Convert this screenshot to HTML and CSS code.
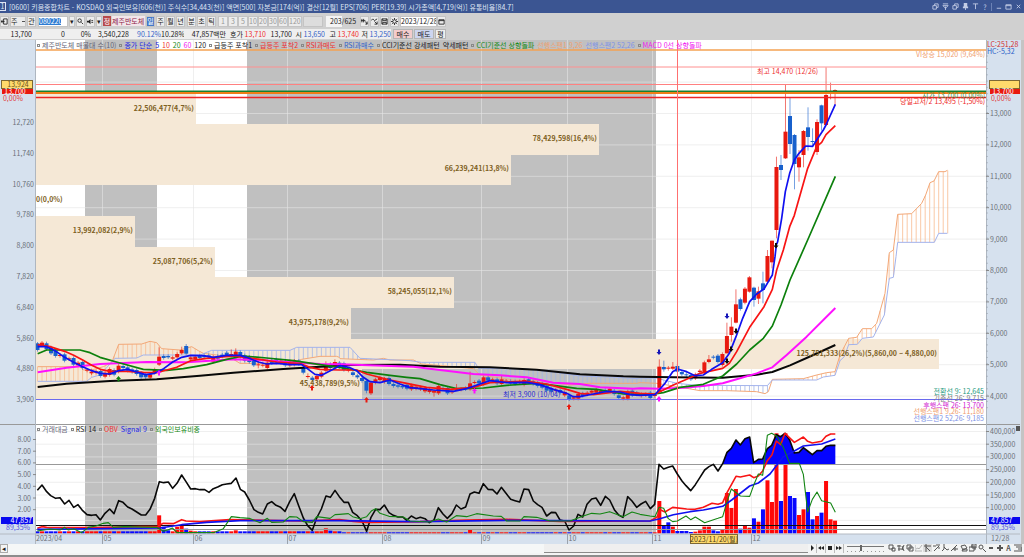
FILE: index.html
```html
<!DOCTYPE html>
<html lang="ko">
    <head>
        <meta charset="utf-8">
        <title>[0600] 키움종합차트</title>
        <meta name="viewport" content="width=device-width, initial-scale=1.0">
        <link rel="stylesheet" href="styles.css">
        <script src="chart.js" defer></script>
    </head>
    <body>
        <header class="titlebar">
            <span class="logo">1</span>
            <h1>[0600] 키움종합차트 - KOSDAQ 외국인보유[606(천)] 주식수[34,443(천)] 액면[500] 자본금[174(억)] 결산[12월] EPS[706] PER[19.39] 시가총액[4,719(억)] 유통비율[84.7]</h1>
            <div class="window-buttons">
                <button aria-label="link"><svg viewBox="0 0 8 8"><path d="M1 3h4v4H1zM3 3V1h4v4H5"/></svg></button>
                <button aria-label="top"><svg viewBox="0 0 8 8"><path d="M1 1h6M1 3h6L4 6zM4 4v4"/></svg></button>
                <button aria-label="copy"><svg viewBox="0 0 8 8"><path d="M1 3h4v4H1zM3 3V1h4v4H5"/></svg></button>
                <button aria-label="pin"><svg viewBox="0 0 8 8"><path class="solid" d="M2 0h4v4h1v2H1V4h1z"/><path d="M4 5v3"/></svg></button>
                <button aria-label="text"><svg viewBox="0 0 8 8"><path d="M1 1h6M4 1v6"/></svg></button>
                <button aria-label="help">?</button>
                <span class="split"></span>
                <button aria-label="minimize"><svg viewBox="0 0 8 8"><path d="M2 6h5"/></svg></button>
                <button aria-label="maximize"><svg viewBox="0 0 8 8"><path d="M1 2h6v5H1zM1 3h6"/></svg></button>
                <button aria-label="close"><svg viewBox="0 0 8 8"><path d="M2 2l4 4M6 2l-4 4"/></svg></button>
            </div>
        </header>

        <nav class="toolbar" aria-label="차트 도구">
            <button class="icon" aria-label="panel"><svg viewBox="0 0 8 8"><path d="M3 1h4v6H3zM0 4h4M2 2L0 4l2 2"/></svg></button>
            <select class="kind" aria-label="종류"><option>주</option></select>
            <button>관</button>
            <input class="code" aria-label="종목코드" value="080220">
            <button class="arrow" aria-label="목록">▾</button>
            <button class="icon" aria-label="검색"><svg viewBox="0 0 8 8"><circle cx="3" cy="3" r="2"/><path d="M5 5l2 2"/></svg></button>
            <button class="icon" aria-label="소리"><svg viewBox="0 0 8 8"><path class="solid" d="M0 3h2l2-2v6L2 5H0z"/><path d="M5 3h2M5 5h2"/></svg></button>
            <button class="arrow" aria-label="소리 설정">▾</button>
            <span class="badge">정</span>
            <span class="stock">제주반도체</span>
            <div class="group">
                <button class="active">일</button><button>주</button><button>월</button><button>년</button>
            </div>
            <div class="group">
                <button>분</button><button>초</button><button>틱</button>
            </div>
            <div class="group minutes">
                <button>1</button><button>3</button><button>5</button><button>10</button><button>20</button><button>30</button><button>60</button><button>120</button>
            </div>
            <select class="unit" aria-label="단위"><option></option></select>
            <label class="count"><input aria-label="봉 개수" value="203">/625</label>
            <button class="icon" aria-label="좁게"><svg viewBox="0 0 8 8"><path d="M0 3h5M1 1v4M3 1v4M5 4l2 3M7 4v3H5"/></svg></button>
            <button class="icon" aria-label="비교"><svg viewBox="0 0 8 8"><path d="M0 3l2-2 2 2 3-2M4 4l3 3M7 4v3H4"/></svg></button>
            <button class="icon" aria-label="저장"><svg viewBox="0 0 8 8"><path d="M1 1h6v6H1zM2 1v2h4V1M2 7V5h4v2"/></svg></button>
            <button class="icon" aria-label="설정"><svg viewBox="0 0 8 8"><circle cx="4" cy="4" r="2"/><path d="M4 0v2M4 6v2M0 4h2M6 4h2M1 1l1 1M6 6l1 1M7 1L6 2M2 6L1 7"/></svg></button>
            <input class="date" aria-label="날짜" value="2023/12/28">
            <button class="icon cal" aria-label="달력"><svg viewBox="0 0 8 8"><path d="M1 2h6v5H1zM1 3h6"/></svg></button>
        </nav>

        <div class="quote">
            <span>13,700</span><span>0</span><span>0%</span><span>3,540,228</span><span class="blue">90.12%</span><span>10.28%</span><span>47,857백만</span>
            <span>호가</span><span class="red">13,710</span><span>13,700</span><span>시</span><span class="blue">13,650</span><span>고</span><span class="red">13,740</span><span>저</span><span class="blue">13,250</span>
            <button class="buy">매수</button><button class="sell">매도</button><button>평</button>
        </div>

        <main class="chart">
            <svg id="chart" viewBox="0 40 1024 504" role="img" aria-label="제주반도체 일봉 차트"></svg>
            <div class="legend price-legend">
                <span class="slate">제주반도체 매물대 수(10)</span>
                <span class="navy">종가 단순</span><i class="navy">5</i><i class="red">10</i><i class="green">20</i><i class="pink">60</i><i>120</i>
                <span>급등주 포착1</span>
                <span class="red">급등주 포착2</span>
                <span class="red">RSI과매도</span>
                <span class="blue">RSI과매수</span>
                <span>CCI기준선 강세패턴</span><i>약세패턴</i>
                <span class="green">CCI기준선 상향돌파</span><i class="orange">선행스팬1 9,26</i><i class="sky">선행스팬2 52,26</i>
                <span class="pink">MACD 0선 상향돌파</span>
            </div>
            <div class="legend volume-legend">
                <span class="slate">거래대금</span>
                <span>RSI 14</span>
                <span class="red">OBV</span><i class="navy">Signal 9</i>
                <span class="green">외국인보유비중</span>
            </div>
        </main>

        <footer class="bottombar">
            <button class="prev" aria-label="왼쪽">◂</button>
            <div class="track"><div class="thumb"></div></div>
            <div class="play">
                <button aria-label="재생"><svg viewBox="0 0 8 8"><path class="solid" d="M3 1l3 3-3 3z"/></svg></button>
                <button aria-label="뒤로"><svg viewBox="0 0 8 8"><path class="solid" d="M4 2L1 4l3 2zM7 2L4 4l3 2z"/></svg></button>
                <button aria-label="정지"><svg viewBox="0 0 8 8"><path class="solid" d="M2 2h4v4H2z"/></svg></button>
                <button aria-label="앞으로"><svg viewBox="0 0 8 8"><path class="solid" d="M1 2l3 2-3 2zM4 2l3 2-3 2z"/></svg></button>
            </div>
            <input type="range" class="speed" aria-label="속도" value="36">
            <div class="tools">
                <button aria-label="창"><svg viewBox="0 0 8 8"><path d="M1 1h4v4H1zM4 4h3v3H4z"/></svg></button>
                <button aria-label="삭제"><svg viewBox="0 0 8 8"><path d="M0 2h4M1 5h5M2 1v6M5 2l2 5M7 1L5 6"/></svg></button>
                <button aria-label="복사"><svg viewBox="0 0 8 8"><path d="M1 1h4v4H1zM3 3h4v4H3z"/></svg></button>
                <button aria-label="차트"><svg viewBox="0 0 8 8"><path class="dim" d="M0 1v6h7M1 5l2-1 1 1 3-4"/></svg></button>
                <button aria-label="십자선" class="on"><svg viewBox="0 0 8 8"><path d="M2 0v8M0 2h7M2 3l4 4"/></svg></button>
                <button aria-label="추세선"><svg viewBox="0 0 8 8"><path d="M0 2h3M3 1h4M1 7l5-5M5 4h2"/></svg></button>
                <button aria-label="파동"><svg viewBox="0 0 8 8"><path d="M2 0v5L0 7M2 3l3 3 2-1"/></svg></button>
                <button aria-label="각도"><svg viewBox="0 0 8 8"><path d="M0 7l6-6M2 5h5M4 3v4"/></svg></button>
                <button aria-label="확대창"><svg viewBox="0 0 8 8"><path d="M1 2l4-1 2 3-4 2zM3 5h4v2H2z"/></svg></button>
                <button aria-label="겹치기"><svg viewBox="0 0 8 8"><path d="M3 0h4v4H3zM0 3h5v4H0zM2 2h4v4"/></svg></button>
                <button aria-label="돋보기"><svg viewBox="0 0 8 8"><circle cx="3" cy="3" r="2"/><path d="M5 5l3 3"/></svg></button>
                <button aria-label="축소"><svg viewBox="0 0 8 8"><path class="bold" d="M2 4h4"/></svg></button>
                <button aria-label="확대"><svg viewBox="0 0 8 8"><path class="bold" d="M1 4h6M4 1v6"/></svg></button>
                <button>A</button>
                <button aria-label="목록"><svg viewBox="0 0 8 8"><path d="M0 1h8M2 3h6v4H0M4 5h4"/></svg></button>
            </div>
        </footer>
    </body>
</html>
```
FILE: styles.css
```css
*,
*::before {
    box-sizing: border-box;
}

body {
    margin: 0;
    background-color: #d0d0d0;
    color: #222;
    font-family: "Noto Sans CJK KR", sans-serif;
    font-size: 7px;
    line-height: 10px;
}

button,
input,
select {
    margin: 0;
    padding: 0;
    border: 0;
    border-radius: 0;
    background: none;
    color: inherit;
    font: inherit;
    appearance: none;
}

button svg {
    display: block;
    width: 8px;
    height: 8px;
    margin: auto;
    fill: none;
    stroke: currentColor;
}

svg .solid {
    fill: currentColor;
    stroke: none;
}

svg .dim {
    opacity: 0.4;
}

svg .bold {
    stroke-width: 2;
}

/* title */
.titlebar {
    display: flex;
    align-items: center;
    height: 13px;
    padding-right: 2px;
    background-color: #3b5592;
    color: #dfe5f4;
}

.logo {
    width: 6px;
    height: 9px;
    line-height: 7px;
    border: 1px solid #dfe5f4;
    border-left: 0;
    text-align: center;
}

h1 {
    flex: 1;
    margin: 0 0 0 3px;
    font-size: 7px;
    font-weight: normal;
    white-space: nowrap;
}

.window-buttons {
    display: flex;
    align-items: center;
    gap: 2px;
}

.window-buttons button {
    width: 8px;
    color: #c3cde6;
}

.window-buttons svg {
    width: 7px;
    height: 7px;
}

.split {
    width: 1px;
    height: 8px;
    background-color: #6c82b5;
}

/* toolbar */
.toolbar {
    display: flex;
    align-items: center;
    gap: 1px;
    height: 15px;
    padding-top: 1px;
}

.toolbar button,
.toolbar select,
.toolbar input {
    height: 11px;
    min-width: 9px;
    background-color: #ececec;
    border: 1px solid #c4c4c4;
    line-height: 9px;
    text-align: center;
}

.toolbar .icon {
    width: 9px;
}

.toolbar .icon svg {
    width: 7px;
    height: 7px;
}

.toolbar .arrow {
    width: 6px;
    min-width: 6px;
}

.toolbar .kind {
    width: 16px;
    background: #ececec linear-gradient(#555, #555) no-repeat 11px 4px / 3px 1px;
    text-align: left;
}

.toolbar .code {
    width: 30px;
    margin-left: 1px;
    background: linear-gradient(#2d7bd2, #2d7bd2) no-repeat 0 1px / 22px 7px #fff;
    color: #fff;
    text-align: left;
}

.badge {
    width: 8px;
    height: 10px;
    background-color: #b84a4a;
    color: #fff;
    text-align: center;
}

.stock {
    width: 33px;
    background-color: #f2e6ea;
    color: #8d2147;
    white-space: nowrap;
}

.group {
    display: flex;
    gap: 1px;
    margin-right: 1px;
}

.toolbar .active {
    background-color: #4378c8;
    color: #fff;
}

.minutes {
    gap: 0;
}

.toolbar .minutes button {
    min-width: 10px;
    color: #999;
}

.toolbar .unit {
    width: 20px;
    margin-left: -1px;
    background-color: #ddd;
}

.count {
    display: flex;
    align-items: center;
    margin: 0 3px 0 2px;
}

.toolbar .count input {
    width: 16px;
    border: 0;
    background-color: #f4f4f4;
    text-align: right;
}

.toolbar .date {
    width: 37px;
    background-color: #fff;
}

.toolbar .cal {
    margin-left: -1px;
}

/* quote row */
.quote {
    display: grid;
    grid-template-columns: 32px 33px 26px 38px 32px 23px 42px 17px 23px 26px 10px 23px 11px 23px 9px 23px 22px 21px 12px;
    align-items: center;
    justify-content: start;
    justify-items: end;
    height: 12px;
    white-space: nowrap;
}

.quote span {
    width: 100%;
    background-color: #efefef;
    text-align: right;
}

.quote button {
    height: 10px;
    width: 20px;
    border: 1px solid #b5b5b5;
    background-color: #eee;
    line-height: 8px;
}

.quote button:last-child {
    width: 11px;
}

.quote .buy {
    background-color: #f3cccc;
}

.quote .sell {
    background-color: #cdd5ef;
}

.red {
    color: #ef3030;
}

.blue {
    color: #3363c8;
}

.navy {
    color: #2020e0;
}

.green {
    color: #148a14;
}

.pink {
    color: #f018f0;
}

.orange {
    color: #efa070;
}

.sky {
    color: #7d92e6;
}

.slate {
    color: #667;
}

/* chart */
.chart {
    position: relative;
}

#chart {
    display: block;
    width: 100%;
    height: auto;
    font-family: "Noto Sans CJK KR", sans-serif;
    font-size: 7px;
}

#chart .axis {
    fill: #6b7078;
}

#chart .profile {
    fill: #7d6022;
    font-weight: bold;
}

.legend {
    position: absolute;
    left: 37px;
    display: flex;
    gap: 3px;
    white-space: nowrap;
}

.legend i {
    font-style: normal;
}

.legend span::before {
    content: "";
    display: inline-block;
    width: 3px;
    height: 3px;
    margin: 0 2px 1px 0;
    border: 1px solid #888;
}

.price-legend {
    top: 0;
}

.volume-legend {
    top: 76%;
    margin-top: 1px;
}

/* bottom */
.bottombar {
    display: flex;
    align-items: center;
    height: 13px;
    padding: 0 2px 3px 0;
    border-bottom: 2px solid #8c8c8c;
    background-color: #f3f4f4;
}

.prev {
    width: 8px;
    height: 9px;
    border: 1px solid #aaa;
    line-height: 7px;
}

.track {
    flex: 1;
    height: 9px;
    background-color: #f5f7f7;
}

.thumb {
    width: 33%;
    height: 9px;
    margin-left: auto;
    background-color: #efefef;
    border-bottom: 1px solid #8a8a8a;
}

.play,
.tools {
    display: flex;
}

.play button {
    width: 9px;
    height: 9px;
    border-right: 1px solid #bbb;
}

.speed {
    width: 37px;
    height: 8px;
    margin: 0 3px;
    background: linear-gradient(#777, #777) no-repeat 0 2px / 100% 1px, repeating-linear-gradient(90deg, #999 0 1px, transparent 1px 4px) no-repeat 0 7px / 100% 1px;
}

.speed::-webkit-slider-thumb {
    appearance: none;
    width: 2px;
    height: 6px;
    background-color: #666;
}

.tools button {
    width: 9px;
    color: #555;
    font-weight: bold;
    line-height: 8px;
}

.tools .on {
    background-color: #ddd;
}
```
FILE: chart.js
```js
const svg = document.getElementById('chart');
const NS = 'http://www.w3.org/2000/svg';

function add(tag, attrs, text) {
    const el = document.createElementNS(NS, tag);
    for (const key in attrs) {
        el.setAttribute(key, attrs[key]);
    }
    if (text) {
        el.textContent = text;
    }
    svg.appendChild(el);
    return el;
}

function rect(x, y, width, height, fill) {
    return add('rect', {x, y, width, height, fill});
}

function line(x1, y1, x2, y2, stroke, width = 1) {
    return add('line', {x1, y1, x2, y2, stroke, 'stroke-width': width});
}

function label(x, y, text, fill, anchor = 'start') {
    return add('text', {x, y, fill, 'text-anchor': anchor}, text);
}

// every series is stored in parts: [left, top, 'x,y x,y ...'], three units to one chart unit
function points(parts) {
    return parts.flatMap(([left, top, list]) => list.split(' ').map((pair) => {
        const [x, y] = pair.split(',').map(Number);
        return [left + x / 3, top + y / 3];
    }));
}

function series(parts, stroke, width) {
    return add('polyline', {points: points(parts).join(' '), fill: 'none', stroke, 'stroke-width': width, 'stroke-linejoin': 'round'});
}

const UP = '#e8190f';
const DOWN = '#1760cc';
const step = 4.506;
const xOf = (i) => 37.5 + i * step;

// backgrounds
rect(0, 40, 1024, 504, '#d6e1ee');
rect(36, 40, 950, 494, '#fff');
rect(85, 40, 72, 494, '#c0c0c0');
rect(247, 40, 409, 494, '#c0c0c0');

// grid
const months = [[102.5, '05'], [193.5, '06'], [287.5, '07'], [382.5, '08'], [481.5, '09'], [567.5, '10'], [652.5, '11'], [751.5, '12']];
for (const [x] of months) {
    line(x, 40, x, 534, 'rgba(228,228,228,.6)');
}
for (let i = -1; i < 10; i++) {
    const y = 113.5 + i * 31.4;
    line(36, y, 986, y, 'rgba(228,228,228,.6)');
}
for (let i = 0; i < 8; i++) {
    line(36, 431.5 + i * 12.7, 986, 431.5 + i * 12.7, 'rgba(228,228,228,.6)');
}

// volume profile
const profile = [
    [94, 160, '22,506,477(4,7%)'],
    [124, 563, '78,429,598(16,4%)'],
    [154, 475, '66,239,241(13,8%)'],
    [185, 0, '0(0,0%)'],
    [216, 99, '13,992,082(2,9%)'],
    [247, 179, '25,087,706(5,2%)'],
    [277, 418, '58,245,055(12,1%)'],
    [308, 315, '43,975,178(9,2%)'],
    [339, 903, '125,751,333(26,2%)(5,860,00 ~ 4,880,00)'],
    [369, 326, '45,438,789(9,5%)']
];
for (const [y, width] of profile) {
    rect(36, y, width, y === 94 || y === 247 || y === 339 ? 30 : 31, '#f5e8d6');
}

// ichimoku cloud
const spanA = [
    [0, 320, '113,140 240,140 250,150 275,150 310,140 335,128 356,73 425,72 450,64 470,68 485,86 540,90 575,80 595,92 610,100 650,105 690,112 720,130 790,130 880,128 905,118 960,109 1010,109 1018,112'],
    [340, 320, '0,116 100,120 130,115 150,120 220,120 245,132 320,138 400,146 420,165 520,180 600,182 690,195 750,190 890,190'],
    [640, 240, '0,428 50,430 112,440 180,452 260,452 350,455 375,461 385,455 397,418 490,416 530,405 560,398 585,395 600,345 626,295 650,292 667,266 695,266 710,250 735,160 748,38 760,30'],
    [660, 60, '713,463 755,461 785,430 797,405 810,368 822,363 836,335 855,335 862,331']
];
const spanB = [
    [0, 320, '113,184 260,184 275,172 300,165 345,115 410,114 430,105 600,105 635,91 870,91 890,82 1018,82'],
    [340, 320, '0,82 30,82 60,115 210,122 245,127 405,127 415,145 560,147 640,156 720,168 830,172 890,176'],
    [640, 240, '0,414 50,415 112,430 170,436 382,437 397,420 530,420 550,411 585,406 600,362 613,350 626,314 652,313 667,295 700,291 733,225 748,115 760,112 768,50'],
    [660, 60, '713,547 823,547 836,520 862,520']
];

function valueAt(list, x) {
    const k = list.findIndex((p) => p[0] >= x);
    if (k < 1) {
        return list[k < 0 ? list.length - 1 : 0][1];
    }
    const [x1, y1] = list[k - 1];
    const [x2, y2] = list[k];
    return y1 + (y2 - y1) * (x - x1) / (x2 - x1);
}

const a = points(spanA);
const b = points(spanB);
for (let i = 0; i <= 202; i++) {
    const ya = valueAt(a, xOf(i));
    const yb = valueAt(b, xOf(i));
    line(xOf(i), ya, xOf(i), yb, ya < yb ? '#f7bb90' : '#a3b6e4', .8);
}
series(spanA, '#f3a878', 1);
series(spanB, '#a3b3ec', 1);

// candles: colour, top, bottom, high, low
const candles = [
    [0, 320, 'B70-90-66-95 R68-76 B70-88 B82-100 B92-108 R105-108 B103-122 R115-118 B114-134 R128-136 B126-144 R149-152 R155-160-146-165 R154-158 B153-168 R158-170 R147-165 B150-164 R137-153-128-160 B138-144 B142-152 B148-156 B150-162 B158-172 B162-172 R163-173 R148-158 R110-134-82-138 B108-114 B108-112 R112-116 R102-112 R90-100-80-104 B78-101-72-104 R112-118 R110-118 B108-114 B106-112 B106-112 R110-125 B108-116 B104-110 B98-106 R102-110-88-112 R95-108-85-112 B96-110 B106-122 B110-126 B122-136 R133-136-120-145 R134-137 R128-144 B120-130 B118-128 R122-128 B124-136 R124-136 R122-134 B122-133 B142-158 R168-171-160-176 B173-180 R168-178 R158-170 R133-152-124-158 B132-144 R126-140-118-146 B128-142'],
    [340, 320, 'B130-150 R148-152 B157-165 B166-172 B174-183 B183-212-180-220 R188-220 R178-188 R172-180 R176-186 B174-192 B192-198 B196-200 B198-202 B194-206 R196-208 R200-206 R202-208 R204-214 R208-216 R212-218-208-230 R198-220 B204-206 B204-220 R212-217 R205-209-192-212 R207-209 B204-208 R190-208-155-212 R186-188 B182-190 R172-192 B172-182 R178-184 B178-190 R178-192-168-196 R182-184 B183-191 B184-192 R184-188 R180-194 B178-186 B184-192 B188-198 B190-203 B198-212 B204-215 R209-212 B210-218 R216-226 B226-238 R232-236 R222-236 B220-228 R218-224 R212-218 R208-218 R213-216 B210-214 R206-214 B212-222 B226-234 R232-236 R214-236 B212-226 B218-224 R222-228 R222-226 B218-234 R224-228'],
    [640, 240, 'R380-455-358-458 B381-388-362-395 R383-386-378-392 R380-386-366-390 B378-395-372-398 B396-403 B403-406-395-415 B405-418 R403-415 R392-396 R367-397 R358-366-345-370 B350-353 B347-366 R342-375 R288-340-248-340 R260-285-232-305 R193-248-148-250 B178-207 R146-188 R112-155-108-158 B143-180-140-200 R154-176-140-192 B130-150-95-190 R48-125-30-128 R2-67-2-85'],
    [660, 60, 'R321-510-290-535 B315-330-285-360 R215-295-72-297 B168-252-112-282 B225-312-222-388 R292-322-270-365 R213-285-210-322 B202-231-142-272 B243-246-205-258 R186-276-178-285 B136-190-134-212 R105-195-22-198 R97-100-68-118 R90-91-88-135']
];
const colors = [];
for (const [, top, list] of candles) {
    for (const item of list.split(' ')) {
        const x = xOf(colors.length);
        const color = item[0] === 'R' ? UP : DOWN;
        const [open, close, high = open - 5, low = close + 5] = item.slice(1).split('-').map(Number);
        line(x, top + high / 3, x, top + low / 3, color, .6);
        rect(x - 2, top + open / 3, 4, Math.max(1, (close - open) / 3), color);
        colors.push(color);
    }
}

// moving averages
const ma5 = [
    [0, 320, '113,80 140,80 165,92 194,112 221,127 248,140 275,152 301,160 329,162 356,152 383,148 410,156 437,164 464,160 491,146 518,126 545,112 572,106 610,107 640,112 680,106 720,106 740,112 775,126 800,132 830,130 870,134 905,134 925,148 945,163 965,166 985,155 1018,138'],
    [340, 320, '0,137 30,143 50,152 70,172 90,185 120,188 150,180 180,192 210,203 240,206 280,210 340,214 380,206 420,192 450,182 500,188 560,187 600,194 640,208 680,220 700,230 720,230 760,222 800,214 840,216 870,224 900,226 945,224'],
    [640, 240, '57,450 75,430 98,395 112,387 140,395 165,407 190,405 215,388 248,368 268,340 288,290 308,235 329,185 350,162 372,147 385,125 397,105 405,50 409,15'],
    [660, 60, '353,545 365,475 376,395 389,340 403,300 417,280 437,258 458,259 470,240 490,210 498,195 526,133']
];
const ma10 = [
    [0, 320, '113,74 150,80 194,94 221,106 248,120 275,136 301,148 330,154 380,154 430,157 470,158 500,150 530,142 572,122 620,115 700,108 780,118 830,126 900,131 930,142 960,148 1018,150'],
    [340, 320, '0,150 50,150 80,162 150,180 200,190 260,202 330,208 400,202 450,188 500,186 560,184 620,192 680,208 720,220 760,224 840,214 900,220 945,222'],
    [640, 240, '60,455 100,435 140,418 180,400 248,385 268,370 290,335 329,262 372,200 397,148 410,90 430,30'],
    [660, 60, '389,500 403,466 443,325 470,260 485,247 498,224 526,197']
];
const ma20 = [
    [0, 320, '113,101 140,90 240,90 270,98 300,112 360,129 430,148 500,151 550,146 620,134 680,118 730,108 800,114 880,122 960,134 1018,142'],
    [340, 320, '0,142 80,157 150,166 200,172 240,176 300,194 350,206 430,204 500,196 590,190 640,196 710,205 770,208 850,222 900,224 945,222'],
    [640, 240, '70,458 120,442 190,433 248,408 290,372 329,330 370,295 397,258 423,195 450,120'],
    [660, 60, '443,540 526,349']
];
const ma60 = [
    [0, 320, '113,157 200,143 300,132 440,126 560,127 700,118 780,120 870,127 960,132 1018,133'],
    [340, 320, '0,133 220,140 300,150 400,162 480,166 560,172 640,188 720,192 780,202 880,206'],
    [640, 240, '0,445 60,446 130,443 190,438 248,430 290,418 350,400 397,382 440,345 500,290 586,204']
];
const ma120 = [
    [0, 320, '113,201 200,191 330,183 470,178 600,167 700,158 850,147 960,140 1018,138'],
    [340, 320, '0,135 180,134 300,140 450,142 590,149 720,163 850,169'],
    [640, 240, '0,410 100,412 248,413 350,404 397,396 450,376 520,345 586,315']
];
series(ma120, '#080808', 2);
series(ma60, '#ff10ff', 2);
series(ma20, '#0c800c', 1.7);
series(ma10, '#f81414', 1.7);
series(ma5, '#1010f0', 1.7);

// level lines
line(36, 50, 986, 50, '#f5a252', 1.4);
line(36, 67, 986, 67, '#ff9090');
line(36, 84.5, 986, 84.5, '#ff8080');
line(36, 91.3, 986, 91.3, '#168030', 1.6);
line(36, 93, 986, 93, '#f07d18', 1.8);
line(36, 97.5, 986, 97.5, '#ee2525', 1.3);
line(36, 399.5, 986, 399.5, '#6a6aee');
line(677.5, 40, 677.5, 534, '#ff7070');

// buy and sell marks
const marks = [
    [118.5, 379, '#0c800c', 1], [159, 373, '#ff10ff', 1], [312, 388, '#e8190f', 1], [366.5, 400, '#e8190f', 1],
    [474.5, 391, '#ff10ff', 1], [569, 407, '#e8190f', 1], [659, 399, '#ff10ff', 1], [659, 352, '#1414b8', -1],
    [727, 316, '#1414b8', -1], [727, 361, '#080808', -1], [731, 349, '#080808', -1], [736, 331, '#080808', -1], [776, 245.5, '#080808', -1]
];
for (const [x, y, fill, dir] of marks) {
    add('path', {d: 'M0-3L2.5 0H1V2.5H-1V0H-2.5Z', transform: `translate(${x} ${y}) scale(1 ${dir})`, fill});
}

// texts over the price pane
for (const [y, width, text] of profile) {
    const el = width ? label(34 + width, y + 17, text, '', 'end') : label(36, y + 17, text, '');
    el.removeAttribute('fill');
    el.setAttribute('class', 'profile');
}
label(757, 74, '최고 14,470 (12/26)', '#ee3030');
label(503, 397, '최저 3,900 (10/04)', '#2828d0');
label(985, 57, 'VI상승 15,020 (9,64%)', '#efa070', 'end');
label(985, 98, '시가 13,700 (0,00%)', '#3c9a50', 'end');
label(985, 104, '당일고저/2 13,495 (-1,50%)', '#ee2525', 'end');
label(984, 394, '전환선 9: 12,645', '#259a80', 'end');
label(984, 401, '기준선 26: 9,715', '#808080', 'end');
label(984, 408, '후행스팬 26: 13,700', '#d020d0', 'end');
label(984, 414, '선행스팬1 9,26: 11,180', '#efa070', 'end');
label(984, 421, '선행스팬2 52,26: 9,185', '#7d92e6', 'end');

// volume bars by day, small days stay near the floor
const volumes = {
    27: 286, 28: 320, 29: 331, 31: 320, 32: 316, 33: 326, 34: 332, 44: 331, 64: 325, 65: 332, 96: 330,
    138: 243, 139: 317, 140: 307, 141: 320, 142: 333, 143: 333, 144: 333, 145: 336, 146: 335, 147: 331, 148: 320, 149: 320,
    150: 331, 151: 334, 152: 328, 153: 219, 154: 264, 155: 207, 156: 326, 157: 318, 158: 323, 159: 295, 160: 305, 161: 268,
    162: 181, 163: 246, 164: 40, 165: 243, 166: 40, 167: 228, 168: 234, 169: 285, 170: 268, 171: 216, 172: 298, 173: 288,
    174: 278, 175: 183, 176: 298, 177: 302
};
// days whose volume bar is not in the colour of the candle
const volumeColors = {139: 'B', 140: 'B', 168: 'B', 169: 'R', 170: 'R', 171: 'B', 172: 'B', 173: 'R'};
colors.forEach((color, i) => {
    const top = 420 + (volumes[i] || (i < 68 ? 334 : 337)) / 3;
    const up = volumeColors[i] ? volumeColors[i] === 'R' : color === UP;
    rect(xOf(i) - 2, top, 4, 533.5 - top, up ? '#ff0808' : '#0808ff');
});

// lower pane
const rsi = [
    [0, 420, '112,211 126,195 140,215 152,227 167,235 180,233 194,252 207,241 221,262 234,254 248,272 261,284 275,286 288,284 301,300 315,280 329,267 342,281 356,242 369,247 383,261 396,267 410,276 424,285 437,285 450,268 464,235 478,185 491,188 505,186 518,205 531,190 545,165 558,185 572,207 586,206 600,209 614,209 627,217 640,206 653,201 667,194 680,192 694,190 708,174 721,208 734,216 748,240 762,269 775,277 788,282 802,252 815,245 828,256 842,262 855,274 869,245 883,221 896,257 910,294 923,317 937,331 950,294 964,267 978,228 991,232 1005,211 1018,230'],
    [340, 420, '12,247 25,247 38,277 52,287 66,303 80,334 93,292 107,268 120,269 133,255 147,278 160,286 174,291 188,291 200,301 214,288 228,296 241,292 255,296 268,308 282,300 295,263 309,282 322,295 336,281 349,255 363,267 377,261 390,222 403,216 417,220 430,191 444,208 458,209 471,222 484,202 498,220 512,238 525,242 539,246 552,207 566,209 580,243 593,254 606,262 620,288 634,277 647,278 660,300 674,303 687,330 701,318 714,283 728,291 741,253 755,237 768,234 782,256 796,229 809,240 823,269 836,285 849,292 863,230 876,243 890,262 903,252 917,244 931,266 944,253'],
    [640, 420, '57,133 71,147 85,142 98,138 112,162 126,183 138,197 152,212 166,194 180,172 194,150 207,140 220,133 234,153 248,131 261,97 274,85 288,60 301,75 315,56 329,51 341,128 355,118 368,117 382,86 395,76 409,44 422,50 435,40 449,60 463,99 477,97 490,83 503,93 517,104 531,92 545,92 558,79 572,76 586,76']
];
const overbought = '248,131 261,97 274,85 288,60 301,75 315,56 329,51 341,128 355,118 368,117 382,86 395,76 409,44 422,50 435,40 449,60 463,99 477,97 490,83 503,93 517,104 531,92 545,92 558,79 572,76 586,76 586,132 248,132';
const obv = [
    [0, 420, '112,325 126,320 140,322 300,323 420,320 470,320 490,310 520,311 545,299 558,303 600,305 690,299 800,301 910,303 1018,299'],
    [340, 420, '40,304 80,307 240,305 380,300 500,298 660,304 930,303'],
    [640, 420, '50,292 62,270 75,276 98,262 140,267 165,268 190,262 216,250 234,253 248,248 261,218 288,169 301,171 329,165 341,173 355,168 368,153 382,122 396,104 409,63 422,74 435,40 463,67 490,51 503,64 517,69 545,64 558,49 572,42 586,42']
];
const signal = [
    [0, 420, '112,328 480,324 545,314 620,307 720,302 1018,302'],
    [340, 420, '230,305 500,301 930,303'],
    [640, 420, '57,297 100,284 150,275 190,270 248,259 275,240 329,198 355,189 390,162 430,110 463,93 490,78 545,72 586,57']
];
const foreign = [
    [0, 420, '112,333 150,327 180,330 194,322 205,330 221,326 245,338 265,322 288,318 310,310 325,308 340,322 370,320 470,322 490,334 505,329 517,324 531,338 640,338 670,326 694,290 720,293 748,295 780,308 802,295 815,307 850,306 869,290 890,291 910,305 937,307 950,290 990,295 1005,284 1018,283'],
    [340, 420, '25,281 38,290 60,296 80,290 95,272 107,266 120,280 147,289 190,291 210,303 268,306 295,297 320,306 349,287 380,290 410,281 460,288 484,289 500,303 540,303 552,290 590,292 630,303 690,303 728,289 755,280 780,282 809,275 849,290 876,276 900,283 930,288'],
    [640, 420, '45,290 57,262 71,265 85,296 98,305 112,303 138,288 152,299 166,291 194,308 234,295 248,290 261,245 274,207 301,228 329,229 341,196 355,162 368,166 382,46 395,40 409,48 430,82 449,130 478,130 490,163 503,276 517,238 531,216 545,242 572,249 586,277']
];
line(36, 525.5, 986, 525.5, '#101010');
line(36, 529.5, 986, 529.5, '#999');
add('polygon', {points: points([[640, 420, overbought]]).join(' '), fill: '#0404ff'});
line(36, 464.5, 986, 464.5, '#999');
series(rsi, '#080808', 1.6);
series(obv, '#f81414', 1.6);
series(signal, '#1010f0', 1.6);
series(foreign, '#138513', 1.1);

// frames and axes
line(0, 424.5, 1020, 424.5, '#999');
line(35.5, 40, 35.5, 544, '#aeb6c0');
line(986.5, 40, 986.5, 544, '#aeb6c0');
line(0, 534, 1020, 534, '#b4bac2');
rect(1021, 40, 3, 504, '#c4c4c4');

function axisLabel(x, y, text, anchor) {
    const el = label(x, y, text, '', anchor);
    el.removeAttribute('fill');
    el.setAttribute('class', 'axis');
}

['12,720', '11,740', '10,760', '9,780', '8,800', '7,820', '6,840', '5,860', '4,880', '3,900'].forEach((text, i) => {
    axisLabel(34, 125 + Math.round(i * 30.8), text, 'end');
});
for (let i = 0; i < 10; i++) {
    axisLabel(990, 116 + Math.round(i * 31.4), `${13 - i},000`);
    line(986, 113.5 + i * 31.4, 989, 113.5 + i * 31.4, '#888');
}
for (let y = 56; y < 410; y += 6.28) {
    line(986, y, 988, y, '#9aa2ad', .6);
}
for (let i = 0; i < 7; i++) {
    axisLabel(31, 442 + Math.round(i * 11.7), `${8 - i}.00`, 'end');
    axisLabel(990, 434 + Math.round(i * 12.7), `${400 - i * 50},000`);
    line(33, 439.5 + i * 11.7, 36, 439.5 + i * 11.7, '#888');
    line(986, 431.5 + i * 12.7, 989, 431.5 + i * 12.7, '#888');
}
axisLabel(36, 541, '2023/04');
axisLabel(991, 541, '12/28');
for (const [x, text] of months) {
    line(x, 534, x, 544, '#9aa2ad');
    axisLabel(x + 1, 541, text);
}
rect(1016, 426, 4, 5, '#555');

label(987, 47, 'LC:251,28', '#d03030');
label(987, 54, 'HC:-5,32', '#2a60c8');

// current value boxes
for (const [x, width, text] of [[1, 32, '13,924'], [989, 31, '']]) {
    rect(x + 1, 88, width - 1, 6, '#e8190f');
    add('rect', {x: x + .5, y: 80.5, width: width - 1, height: 8, fill: '#ffda6c', stroke: '#7d6834'});
    label(x + 17, 87, text, '#6b5520', 'middle');
    label(x + 14, 94, '13,700', '#fff', 'middle');
    label(x + 12, 101, '0,00%', '#e04040', 'middle');
    rect(x, 517, width, 7, '#0808f0');
    label(x + (x > 500 ? 2 : 31), 523, '47,857', '#fff', x > 500 ? 'start' : 'end');
    label(x + (x > 500 ? 2 : 29), 530, '89,35%', '#5050e0', x > 500 ? 'start' : 'end');
}
add('rect', {x: 690.5, y: 534.5, width: 47, height: 9, fill: '#ffda6c', stroke: '#7d6834'});
label(714, 542, '2023/11/20(월)', '#4b3c18', 'middle');
```
